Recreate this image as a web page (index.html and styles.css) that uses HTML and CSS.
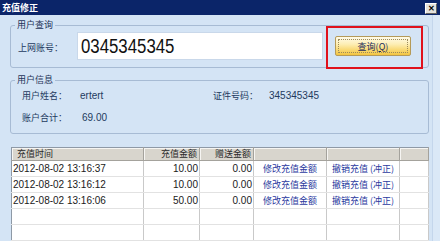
FILE: index.html
```html
<!DOCTYPE html>
<html lang="zh-CN">
<head>
<meta charset="utf-8">
<title>充值修正</title>
<link rel="stylesheet" href="styles.css">
</head>
<body>
<div class="window">
  <div class="titlebar">
    <span class="title">充值修正</span>
    <span class="close">✕</span>
  </div>
  <div class="body">
    <div class="main">
      <fieldset class="group query">
        <legend>用户查询</legend>
        <div class="query-row">
          <label class="lbl acct-lbl">上网账号：</label>
          <div class="input"><span class="input-text">0345345345</span></div>
          <div class="btn-wrap">
            <button class="btn">查询(<u>Q</u>)</button>
            <span class="highlight"></span>
          </div>
        </div>
      </fieldset>
      <fieldset class="group info">
        <legend>用户信息</legend>
        <div class="info-grid">
          <span class="lbl">用户姓名：</span><span class="val">ertert</span>
          <span class="lbl">证件号码：</span><span class="val">345345345</span>
          <span class="lbl">账户合计：</span><span class="val val-sum">69.00</span>
        </div>
      </fieldset>
      <div class="table-wrap">
        <table class="grid">
          <colgroup>
            <col class="c-time"><col class="c-amt"><col class="c-gift"><col class="c-act"><col class="c-act2"><col class="c-rest">
          </colgroup>
          <thead>
            <tr><th class="left">充值时间</th><th>充值金额</th><th>赠送金额</th><th></th><th></th><th></th></tr>
          </thead>
          <tbody>
            <tr><td>2012-08-02 13:16:37</td><td class="num">10.00</td><td class="num">0.00</td><td class="link">修改充值金额</td><td class="link">撤销充值 (冲正)</td><td></td></tr>
            <tr><td>2012-08-02 13:16:12</td><td class="num">10.00</td><td class="num">0.00</td><td class="link">修改充值金额</td><td class="link">撤销充值 (冲正)</td><td></td></tr>
            <tr><td>2012-08-02 13:16:06</td><td class="num">50.00</td><td class="num">0.00</td><td class="link">修改充值金额</td><td class="link">撤销充值 (冲正)</td><td></td></tr>
            <tr><td></td><td></td><td></td><td></td><td></td><td></td></tr>
            <tr><td></td><td></td><td></td><td></td><td></td><td></td></tr>
            <tr><td></td><td></td><td></td><td></td><td></td><td></td></tr>
          </tbody>
        </table>
      </div>
    </div>
    <div class="edge"></div>
  </div>
</div>
</body>
</html>
```

FILE: styles.css
```css
* { box-sizing: border-box; }

body {
  margin: 0;
  width: 440px;
  height: 241px;
  overflow: hidden;
  background: #d4e4f5;
  font-family: "Liberation Sans", "Noto Sans CJK SC", sans-serif;
  font-size: 10px;
  color: #1f2f4a;
}

.window {
  height: 241px;
  display: flex;
  flex-direction: column;
  overflow: hidden;
}

.titlebar {
  height: 15px;
  flex: none;
  background: #0b2569;
  display: flex;
  align-items: center;
  justify-content: space-between;
  padding: 0 3px 0 2px;
}

.title {
  color: #ffffff;
  font-family: "Noto Sans CJK SC", sans-serif;
  font-weight: bold;
  font-size: 9px;
  line-height: 15px;
}

.close {
  width: 12px;
  height: 11px;
  margin-top: 1px;
  background: #e4e2dc;
  border: 1px solid;
  border-color: #ffffff #606060 #606060 #ffffff;
  color: #000;
  font-size: 8px;
  font-weight: bold;
  line-height: 9px;
  text-align: center;
}

.body {
  flex: 1;
  display: flex;
  min-height: 0;
}

.main {
  width: 429px;
  padding-left: 10px;
  display: flex;
  flex-direction: column;
  min-height: 0;
}

.edge {
  flex: 1;
  margin-left: 3px;
  border-left: 1px solid #c4d6ec;
  background: #dae8f7;
}

fieldset.group {
  margin: 4px 0 0;
  padding: 1px 5px 7px 7px;
  border: 1px solid #a7bbd4;
  border-radius: 3px;
  min-width: 0;
  flex: none;
}

fieldset.info {
  margin-top: 6px;
  padding-bottom: 8px;
}

legend {
  margin-left: -3px;
  padding: 0 2px;
  font-family: "Noto Sans CJK SC", sans-serif;
  font-size: 9px;
  line-height: 12px;
  color: #1d3358;
}

.lbl {
  font-family: "Noto Sans CJK SC", sans-serif;
  font-size: 9px;
  color: #233a5e;
}

.query-row {
  display: flex;
  align-items: center;
  height: 28px;
}

.acct-lbl {
  width: 59px;
  flex: none;
  padding-top: 2px;
}

.input {
  width: 246px;
  height: 28px;
  flex: none;
  background: #ffffff;
  border: 1px solid #c9d8ea;
  padding-left: 3px;
  display: flex;
  align-items: center;
  overflow: hidden;
}

.input-text {
  display: inline-block;
  font-family: "Liberation Sans", sans-serif;
  font-size: 20px;
  color: #111;
  transform: scaleX(0.84);
  transform-origin: left center;
}

.btn-wrap {
  position: relative;
  margin-left: 12px;
  width: 76px;
  height: 20px;
  flex: none;
}

.btn {
  display: block;
  width: 76px;
  height: 20px;
  margin: 0;
  padding: 0;
  border: 1px solid #b59a58;
  border-radius: 2px;
  background: linear-gradient(#fffbe8 0%, #fdeeb4 40%, #f8d66c 75%, #f3c540 100%);
  outline: 1px dotted #9c8a5c;
  outline-offset: -4px;
  font-family: "Noto Sans CJK SC", sans-serif;
  font-size: 9px;
  color: #1b2c5c;
}

.highlight {
  position: absolute;
  left: -9px;
  top: -10px;
  width: 97px;
  height: 43px;
  border: 2px solid #e0111c;
  pointer-events: none;
}

.info-grid {
  display: grid;
  grid-template-columns: 58px 133px 56px auto;
  grid-auto-rows: 16px;
  row-gap: 6px;
  align-items: center;
  padding-left: 4px;
}

.val {
  font-size: 10px;
  color: #233a5e;
}

.val-sum {
  padding-left: 2px;
}

.table-wrap {
  margin-top: 13px;
  margin-left: 1px;
  flex: 1;
  min-height: 0;
  overflow: hidden;
}

table.grid {
  width: 417px;
  border-collapse: collapse;
  table-layout: fixed;
  background: #ffffff;
  border: 1px solid #8e99a6;
}

.c-time { width: 132px; }
.c-amt { width: 56px; }
.c-gift { width: 54px; }
.c-act { width: 73px; }
.c-act2 { width: 73px; }
.c-rest { width: 29px; }

th {
  height: 13px;
  padding: 0 2px 0 5px;
  background: #d8d5cd;
  border-right: 1px solid #a4a29c;
  border-bottom: 1px solid #a4a29c;
  box-shadow: inset 1px 1px 0 #f6f5f2;
  font-family: "Noto Sans CJK SC", sans-serif;
  font-size: 9px;
  font-weight: normal;
  line-height: 12px;
  color: #2a2a2a;
  text-align: right;
}

th.left { text-align: left; }

td {
  height: 16px;
  padding: 0 1px;
  border-right: 1px solid #c9c9c9;
  border-bottom: 1px solid #e2e2e2;
  font-size: 10px;
  line-height: 14px;
  color: #1a1a1a;
  white-space: nowrap;
  overflow: hidden;
}

td.num { text-align: right; }

td.link {
  text-align: center;
  font-family: "Noto Sans CJK SC", sans-serif;
  font-size: 9px;
  color: #2b3aa0;
}
```
